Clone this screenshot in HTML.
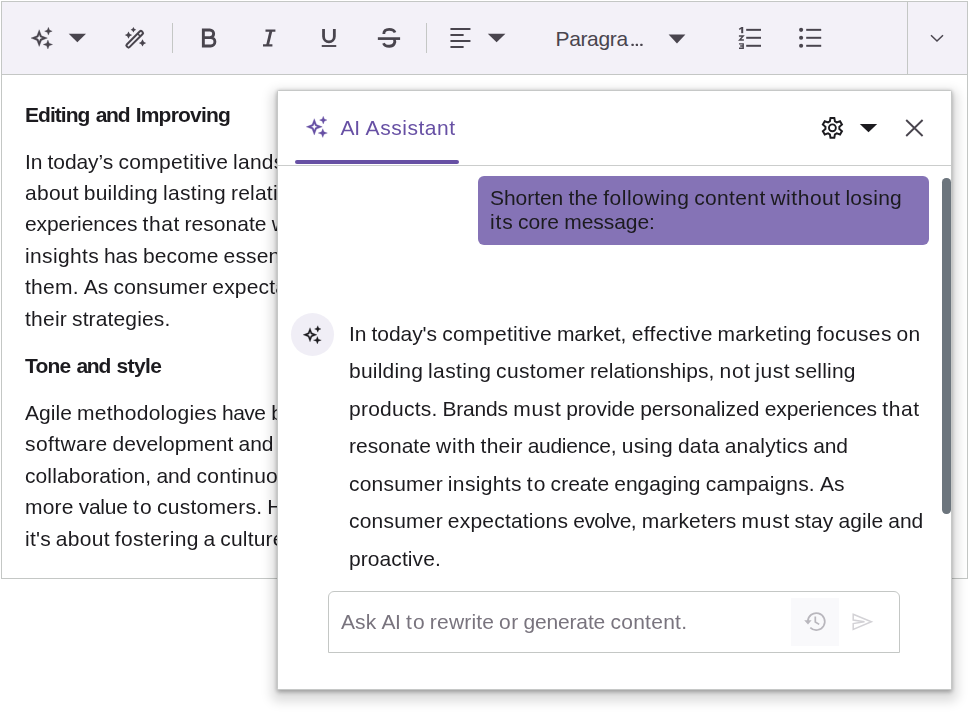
<!DOCTYPE html>
<html><head><meta charset="utf-8"><title>AI Assistant</title>
<style>
html,body{margin:0;padding:0;background:#fff}
body{width:969px;height:713px;position:relative;overflow:hidden;font-family:"Liberation Sans",sans-serif;font-size:21px}
#rte{position:absolute;left:1px;top:1px;width:967px;height:578px;box-sizing:border-box;border:1px solid #c4c7c5;background:#fff}
#tb{position:absolute;left:0;top:0;width:965px;height:72px;background:#f3f1f8;border-bottom:1px solid #c4c7c5}
#exp{position:absolute;left:905px;top:0;width:60px;height:72px;border-left:1px solid #c4c7c5;box-sizing:border-box}
#clipl{position:absolute;left:0;top:0;width:300px;height:578px;overflow:hidden}
#dlg{position:absolute;left:277px;top:90px;width:675px;height:600px;box-sizing:border-box;border:1px solid #c6c8c7;background:#fff;border-radius:1.5px;
 box-shadow:0 1.5px 4.5px rgba(0,0,0,.30),0 6px 12px 4.5px rgba(0,0,0,.15)}
#hl{position:absolute;left:278px;top:165px;width:673px;height:1px;background:#cbcdcc}
#ul{position:absolute;left:295px;top:160px;width:164px;height:4.2px;border-radius:2.2px;background:#6750a4}
#bub{position:absolute;left:478px;top:176px;width:451.3px;height:68.6px;border-radius:6px;background:#8573b6}
#sb{position:absolute;left:942.3px;top:177.5px;width:8.4px;height:336.5px;border-radius:4.2px;background:#6c757d}
#av{position:absolute;left:291px;top:313px;width:43px;height:43px;border-radius:50%;background:#f0eef6}
#inp{position:absolute;left:328px;top:591px;width:572px;height:62px;box-sizing:border-box;border:1px solid #c4c7c5;border-radius:6px 6px 0 0;background:#fff}
#hb{position:absolute;left:791px;top:598px;width:47.7px;height:47.7px;background:#f9f9fb}
.ln{position:absolute;white-space:nowrap;line-height:31px;height:31px;font-size:21px}
.fw span{position:absolute;top:0;white-space:pre}
.ln:not(#fmt):not(#tab){will-change:transform}
#ov{position:absolute;left:0;top:0}
</style></head><body>
<div id="rte"><div id="tb"><div id="exp"></div></div></div>
<div id="clipl">
<div class="ln fw" id="h1" style="left:25.40px;top:99px;font-weight:700;color:#1c1b1f"><span style="left:0.00px;letter-spacing:-0.953px">Editing </span><span style="left:70.64px;letter-spacing:-1.250px">and </span><span style="left:110.69px;letter-spacing:-0.789px">Improving</span></div>
<div class="ln fw" id="a1" style="left:24.90px;top:146px;font-weight:400;color:#1c1b1f"><span style="left:0.00px;letter-spacing:-0.203px">In </span><span style="left:22.52px;letter-spacing:-0.070px">today’s </span><span style="left:93.45px;letter-spacing:0.323px">competitive </span><span style="left:208.11px;letter-spacing:0.222px">landsc</span><span style="left:269.92px">ape, effective marketing is</span></div>
<div class="ln fw" id="a2" style="left:24.90px;top:177px;font-weight:400;color:#1c1b1f"><span style="left:0.00px;letter-spacing:0.270px">about </span><span style="left:58.84px;letter-spacing:0.219px">building </span><span style="left:137.97px;letter-spacing:0.341px">lasting </span><span style="left:205.91px;letter-spacing:0.227px">relatio</span><span style="left:264.47px">nships with customers. Brands need to deliver personalized</span></div>
<div class="ln fw" id="a3" style="left:24.90px;top:208px;font-weight:400;color:#1c1b1f"><span style="left:0.00px;letter-spacing:-0.083px">experiences </span><span style="left:117.61px;letter-spacing:0.568px">that </span><span style="left:159.55px;letter-spacing:0.025px">resonate </span><span style="left:246.66px;letter-spacing:1.047px">wi</span><span style="left:267.55px">th their audience. Leveraging data analytics and consumer</span></div>
<div class="ln fw" id="a4" style="left:24.90px;top:240px;font-weight:400;color:#1c1b1f"><span style="left:0.00px;letter-spacing:0.359px">insights </span><span style="left:78.92px;letter-spacing:-0.008px">has </span><span style="left:117.95px;letter-spacing:0.150px">become </span><span style="left:198.61px;letter-spacing:0.113px">essent</span><span style="left:261.05px">ial for creating targeted campaigns that engage and convert</span></div>
<div class="ln fw" id="a5" style="left:24.90px;top:271px;font-weight:400;color:#1c1b1f"><span style="left:0.00px;letter-spacing:0.250px">them. </span><span style="left:58.73px;letter-spacing:0.031px">As </span><span style="left:88.47px;letter-spacing:0.210px">consumer </span><span style="left:187.33px;letter-spacing:0.181px">expectat</span><span style="left:267.99px">ions evolve, marketers must remain agile and proactive in adapting</span></div>
<div class="ln fw" id="a6" style="left:24.90px;top:303px;font-weight:400;color:#1c1b1f"><span style="left:0.00px;letter-spacing:0.234px">their </span><span style="left:47.00px;letter-spacing:0.138px">strategies.</span></div>
<div class="ln fw" id="h2" style="left:25.40px;top:350px;font-weight:700;color:#1c1b1f"><span style="left:0.00px;letter-spacing:-0.797px">Tone </span><span style="left:51.42px;letter-spacing:-1.250px">and </span><span style="left:91.47px;letter-spacing:-0.625px">style</span></div>
<div class="ln fw" id="b1" style="left:24.90px;top:397px;font-weight:400;color:#1c1b1f"><span style="left:0.00px;letter-spacing:0.035px">Agile </span><span style="left:52.05px;letter-spacing:0.263px">methodologies </span><span style="left:196.98px;letter-spacing:-0.505px">have </span><span style="left:246.20px;letter-spacing:-0.406px">be</span><span style="left:269.15px">come the backbone of modern</span></div>
<div class="ln fw" id="b2" style="left:24.90px;top:428px;font-weight:400;color:#1c1b1f"><span style="left:0.00px;letter-spacing:0.411px">software </span><span style="left:87.45px;letter-spacing:0.067px">development </span><span style="left:213.58px;letter-spacing:-0.086px">and </span><span style="left:253.64px;letter-spacing:-0.406px">be</span><span style="left:276.59px">yond, emphasizing flexibility,</span></div>
<div class="ln fw" id="b3" style="left:24.90px;top:460px;font-weight:400;color:#1c1b1f"><span style="left:0.00px;letter-spacing:0.097px">collaboration, </span><span style="left:131.39px;letter-spacing:-0.086px">and </span><span style="left:171.45px;letter-spacing:0.277px">continuou</span><span style="left:264.75px">s improvement. By breaking work into smaller pieces, teams deliver</span></div>
<div class="ln fw" id="b4" style="left:24.90px;top:491px;font-weight:400;color:#1c1b1f"><span style="left:0.00px;letter-spacing:0.198px">more </span><span style="left:53.66px;letter-spacing:-0.234px">value </span><span style="left:108.12px;letter-spacing:1.141px">to </span><span style="left:131.97px;letter-spacing:0.267px">customers. </span><span style="left:242.27px;letter-spacing:0.125px">Ho</span><span style="left:269.25px">wever, agile isn't just about process;</span></div>
<div class="ln fw" id="b5" style="left:24.90px;top:523px;font-weight:400;color:#1c1b1f"><span style="left:0.00px;letter-spacing:0.219px">it's </span><span style="left:30.86px;letter-spacing:0.273px">about </span><span style="left:89.72px;letter-spacing:0.400px">fostering </span><span style="left:178.53px;letter-spacing:0.000px">a </span><span style="left:195.28px;letter-spacing:0.195px">culture </span><span style="left:264.83px;letter-spacing:0.000px">o</span><span style="left:276.83px">f trust, transparency and shared ownership.</span></div>
</div>
<div id="dlg"></div>
<div id="hl"></div><div id="ul"></div>
<div id="bub"></div><div id="sb"></div><div id="av"></div>
<div id="inp"></div><div id="hb"></div>
<div class="ln fw" id="r1" style="left:348.95px;top:318px;font-weight:400;color:#1c1b1f"><span style="left:0.00px;letter-spacing:-0.203px">In </span><span style="left:22.52px;letter-spacing:-0.057px">today's </span><span style="left:93.25px;letter-spacing:0.323px">competitive </span><span style="left:207.91px;letter-spacing:-0.078px">market, </span><span style="left:282.64px;letter-spacing:0.369px">effective </span><span style="left:368.62px;letter-spacing:0.213px">marketing </span><span style="left:467.72px;letter-spacing:0.383px">focuses </span><span style="left:547.59px;letter-spacing:0.234px">on</span></div>
<div class="ln fw" id="r2" style="left:348.95px;top:355px;font-weight:400;color:#1c1b1f"><span style="left:0.00px;letter-spacing:0.217px">building </span><span style="left:79.12px;letter-spacing:0.341px">lasting </span><span style="left:147.06px;letter-spacing:0.339px">customer </span><span style="left:240.98px;letter-spacing:0.054px">relationships, </span><span style="left:370.61px;letter-spacing:0.625px">not </span><span style="left:406.27px;letter-spacing:0.547px">just </span><span style="left:445.78px;letter-spacing:0.193px">selling</span></div>
<div class="ln fw" id="r3" style="left:348.95px;top:393px;font-weight:400;color:#1c1b1f"><span style="left:0.00px;letter-spacing:0.244px">products. </span><span style="left:93.53px;letter-spacing:-0.206px">Brands </span><span style="left:164.23px;letter-spacing:0.734px">must </span><span style="left:217.16px;letter-spacing:-0.016px">provide </span><span style="left:291.14px;letter-spacing:0.023px">personalized </span><span style="left:415.67px;letter-spacing:-0.081px">experiences </span><span style="left:533.28px;letter-spacing:0.573px">that</span></div>
<div class="ln fw" id="r4" style="left:348.95px;top:430px;font-weight:400;color:#1c1b1f"><span style="left:0.00px;letter-spacing:0.025px">resonate </span><span style="left:87.09px;letter-spacing:0.661px">with </span><span style="left:131.62px;letter-spacing:0.238px">their </span><span style="left:178.64px;letter-spacing:-0.266px">audience, </span><span style="left:272.78px;letter-spacing:0.184px">using </span><span style="left:328.91px;letter-spacing:0.234px">data </span><span style="left:375.67px;letter-spacing:0.201px">analytics </span><span style="left:464.17px;letter-spacing:-0.078px">and</span></div>
<div class="ln fw" id="r5" style="left:348.95px;top:468px;font-weight:400;color:#1c1b1f"><span style="left:0.00px;letter-spacing:0.208px">consumer </span><span style="left:98.84px;letter-spacing:0.362px">insights </span><span style="left:177.78px;letter-spacing:1.141px">to </span><span style="left:201.62px;letter-spacing:0.025px">create </span><span style="left:265.31px;letter-spacing:-0.025px">engaging </span><span style="left:356.75px;letter-spacing:0.172px">campaigns. </span><span style="left:470.88px;letter-spacing:0.047px">As</span></div>
<div class="ln fw" id="r6" style="left:348.95px;top:505px;font-weight:400;color:#1c1b1f"><span style="left:0.00px;letter-spacing:0.208px">consumer </span><span style="left:98.84px;letter-spacing:0.205px">expectations </span><span style="left:224.22px;letter-spacing:-0.521px">evolve, </span><span style="left:292.83px;letter-spacing:0.145px">marketers </span><span style="left:392.53px;letter-spacing:0.734px">must </span><span style="left:445.44px;letter-spacing:0.141px">stay </span><span style="left:489.56px;letter-spacing:0.051px">agile </span><span style="left:539.34px;letter-spacing:-0.086px">and</span></div>
<div class="ln fw" id="r7" style="left:348.95px;top:543px;font-weight:400;color:#1c1b1f"><span style="left:0.00px;letter-spacing:0.083px">proactive.</span></div>
<div class="ln fw" id="u1" style="left:489.60px;top:182px;font-weight:400;color:#1c1b1f"><span style="left:0.00px;letter-spacing:-0.052px">Shorten </span><span style="left:78.44px;letter-spacing:0.195px">the </span><span style="left:113.22px;letter-spacing:0.506px">following </span><span style="left:204.17px;letter-spacing:0.362px">content </span><span style="left:280.42px;letter-spacing:0.536px">without </span><span style="left:355.38px;letter-spacing:0.312px">losing</span></div>
<div class="ln fw" id="u2" style="left:489.60px;top:206px;font-weight:400;color:#1c1b1f"><span style="left:0.00px;letter-spacing:0.914px">its </span><span style="left:28.02px;letter-spacing:0.062px">core </span><span style="left:74.25px;letter-spacing:-0.051px">message:</span></div>
<div class="ln fw" id="tab" style="left:340.50px;top:112px;font-weight:400;color:#6750a4"><span style="left:0.00px;letter-spacing:-0.248px">AI </span><span style="left:25.12px;letter-spacing:0.531px">Assistant</span></div>
<div class="ln fw" id="ph" style="left:341.40px;top:606px;font-weight:400;color:#79747e"><span style="left:0.00px;letter-spacing:0.086px">Ask </span><span style="left:40.38px;letter-spacing:-0.406px">AI </span><span style="left:65.00px;letter-spacing:1.141px">to </span><span style="left:88.86px;letter-spacing:0.177px">rewrite </span><span style="left:158.12px;letter-spacing:0.422px">or </span><span style="left:182.44px;letter-spacing:-0.158px">generate </span><span style="left:269.44px;letter-spacing:0.266px">content.</span></div>
<div class="ln fw" id="fmt" style="left:555.50px;top:23px;font-weight:400;color:#49454e"><span style="left:0.00px;letter-spacing:-0.352px">Paragra</span></div>
<svg id="ov" width="969" height="713" viewBox="0 0 969 713"><path d="M39.20,29.70 L41.50,35.80 L47.40,38.10 L41.50,40.40 L39.20,46.50 L36.90,40.40 L31.00,38.10 L36.90,35.80Z M39.20,34.60 L40.20,37.10 L42.50,38.10 L40.20,39.10 L39.20,41.60 L38.20,39.10 L35.90,38.10 L38.20,37.10Z" fill="#49454e" fill-rule="evenodd" stroke="#49454e" stroke-width="0.30"/><path d="M48.40,27.30 L49.50,30.10 L52.20,31.20 L49.50,32.30 L48.40,35.10 L47.30,32.30 L44.60,31.20 L47.30,30.10Z" fill="#49454e" stroke="#49454e" stroke-width="0.30"/><path d="M47.90,40.00 L49.15,43.25 L52.60,44.50 L49.15,45.75 L47.90,49.00 L46.65,45.75 L43.20,44.50 L46.65,43.25Z" fill="#49454e" stroke="#49454e" stroke-width="0.30"/>
<path d="M68.7,33.8 H86 L77.35,42.3Z" fill="#49454e"/>
<g transform="translate(134.7,39.2) rotate(-45)"><rect x="-10.6" y="-1.9" width="21.2" height="3.8" rx="1.3" fill="none" stroke="#49454e" stroke-width="2.05"/><path d="M6.0,-1.9 V1.9" stroke="#49454e" stroke-width="1.5"/></g>
<path d="M128.50,31.40 Q129.24,34.36 132.20,35.10 Q129.24,35.84 128.50,38.80 Q127.76,35.84 124.80,35.10 Q127.76,34.36 128.50,31.40Z" fill="#49454e"/>
<path d="M133.40,27.00 Q133.96,29.24 136.20,29.80 Q133.96,30.36 133.40,32.60 Q132.84,30.36 130.60,29.80 Q132.84,29.24 133.40,27.00Z" fill="#49454e"/>
<path d="M142.50,39.20 Q143.24,42.16 146.20,42.90 Q143.24,43.64 142.50,46.60 Q141.76,43.64 138.80,42.90 Q141.76,42.16 142.50,39.20Z" fill="#49454e"/>
<rect x="172" y="23" width="1" height="30" fill="#c4c7c5"/>
<rect x="426" y="23" width="1" height="30" fill="#c4c7c5"/>
<path d="M203.35,28.6 V47.4 M202,29.95 H209.8 A3.85,3.85 0 0 1 209.8,37.65 H203.3 M209.8,37.65 H210.7 A4.2,4.2 0 0 1 210.7,46.05 H202" fill="none" stroke="#49454e" stroke-width="2.9" stroke-linejoin="miter"/>
<path d="M265.5,30.6 H275.4 M263,45.3 H272.4" fill="none" stroke="#49454e" stroke-width="2.2"/><path d="M271.0,30.6 L267.5,45.3" fill="none" stroke="#49454e" stroke-width="2.8"/>
<path d="M323.55,28.95 V36.45 A5.4,5.4 0 0 0 334.35,36.45 V28.95" fill="none" stroke="#49454e" stroke-width="2.8"/><path d="M321.75,46.0 H336.25" stroke="#49454e" stroke-width="1.9"/>
<path d="M377.85,38.6 H400.1" stroke="#49454e" stroke-width="2.7"/><path d="M383.8,34.0 C383.8,30.7 386.3,29.35 389.2,29.35 C392,29.35 394.2,30.4 395.0,32.5 M394.2,39.0 C395.6,42 394.5,46.25 389.3,46.25 C386.5,46.25 384.3,45.2 383.5,43.2" fill="none" stroke="#49454e" stroke-width="2.8"/>
<path d="M451.2,29.1 H469.7" stroke="#49454e" stroke-width="2" stroke-linecap="round"/>
<path d="M451.2,35.05 H462.9" stroke="#49454e" stroke-width="2" stroke-linecap="round"/>
<path d="M451.2,41.0 H469.7" stroke="#49454e" stroke-width="2" stroke-linecap="round"/>
<path d="M451.2,47.1 H462.9" stroke="#49454e" stroke-width="2" stroke-linecap="round"/>
<path d="M487.8,33.8 H505.4 L496.6,42.3Z" fill="#49454e"/>
<path d="M668.6,34.6 H685.4 L677,43.4Z" fill="#49454e"/>
<path d="M746.2,29.85 H761" stroke="#49454e" stroke-width="2"/>
<path d="M806.2,29.85 H821.2" stroke="#49454e" stroke-width="2"/>
<circle cx="801.1" cy="29.85" r="2.05" fill="#49454e"/>
<path d="M746.2,37.8 H761" stroke="#49454e" stroke-width="2"/>
<path d="M806.2,37.8 H821.2" stroke="#49454e" stroke-width="2"/>
<circle cx="801.1" cy="37.8" r="2.05" fill="#49454e"/>
<path d="M746.2,45.8 H761" stroke="#49454e" stroke-width="2"/>
<path d="M806.2,45.8 H821.2" stroke="#49454e" stroke-width="2"/>
<circle cx="801.1" cy="45.8" r="2.05" fill="#49454e"/>
<path d="M742.2,27 V33.2" stroke="#49454e" stroke-width="2"/><path d="M739.2,29.3 L741.8,27.7" stroke="#49454e" stroke-width="1.5"/>
<path d="M738.9,36 H743.2 L739.6,40 H743.9" fill="none" stroke="#49454e" stroke-width="1.4" stroke-linejoin="miter"/>
<path d="M739,43.9 H743.2 V48.2 H739 M740.2,46 H743.2" fill="none" stroke="#49454e" stroke-width="1.4" stroke-linejoin="miter"/>
<rect x="631.50" y="43.8" width="2.2" height="2.2" rx="0.5" fill="#49454e"/>
<rect x="635.80" y="43.8" width="2.2" height="2.2" rx="0.5" fill="#49454e"/>
<rect x="640.30" y="43.8" width="2.2" height="2.2" rx="0.5" fill="#49454e"/>
<path d="M931.0,35.2 L937,41.0 L943.0,35.2" fill="none" stroke="#49454e" stroke-width="1.5"/>
<path d="M314.29,118.64 L316.53,124.59 L322.28,126.83 L316.53,129.07 L314.29,135.02 L312.05,129.07 L306.29,126.83 L312.05,124.59Z M314.29,123.42 L315.26,125.85 L317.50,126.83 L315.26,127.80 L314.29,130.24 L313.31,127.80 L311.07,126.83 L313.31,125.85Z" fill="#6750a4" fill-rule="evenodd" stroke="#6750a4" stroke-width="0.29"/><path d="M323.26,116.30 L324.33,119.03 L326.96,120.10 L324.33,121.17 L323.26,123.90 L322.19,121.17 L319.55,120.10 L322.19,119.03Z" fill="#6750a4" stroke="#6750a4" stroke-width="0.29"/><path d="M322.77,128.68 L323.99,131.85 L327.35,133.07 L323.99,134.29 L322.77,137.45 L321.55,134.29 L318.19,133.07 L321.55,131.85Z" fill="#6750a4" stroke="#6750a4" stroke-width="0.29"/>
<path d="M829.87,121.32 L830.49,117.93 L834.31,117.93 L834.93,121.32 A7.00,7.00 0 0 1 836.79,122.39 L840.04,121.24 L841.94,124.54 L839.32,126.78 A7.00,7.00 0 0 1 839.32,128.92 L841.94,131.16 L840.04,134.46 L836.79,133.31 A7.00,7.00 0 0 1 834.93,134.38 L834.31,137.77 L830.49,137.77 L829.87,134.38 A7.00,7.00 0 0 1 828.01,133.31 L824.76,134.46 L822.86,131.16 L825.48,128.92 A7.00,7.00 0 0 1 825.48,126.78 L822.86,124.54 L824.76,121.24 L828.01,122.39 A7.00,7.00 0 0 1 829.87,121.32Z" fill="none" stroke="#1c1b1f" stroke-width="2" stroke-linejoin="miter"/>
<circle cx="832.4" cy="127.85" r="3.45" fill="none" stroke="#1c1b1f" stroke-width="1.9"/>
<path d="M859.8,123.9 H877.2 L868.5,132.3Z" fill="#1c1b1f"/>
<path d="M906.2,120 L922.6,136 M922.6,120 L906.2,136" stroke="#49454e" stroke-width="1.9"/>
<path d="M310.02,327.71 L311.95,332.85 L316.93,334.79 L311.95,336.73 L310.02,341.87 L308.08,336.73 L303.10,334.79 L308.08,332.85Z M310.02,331.84 L310.86,333.95 L312.80,334.79 L310.86,335.63 L310.02,337.74 L309.17,335.63 L307.23,334.79 L309.17,333.95Z" fill="#1c1b1f" fill-rule="evenodd" stroke="#1c1b1f" stroke-width="0.25"/><path d="M317.77,325.68 L318.70,328.04 L320.97,328.97 L318.70,329.90 L317.77,332.26 L316.84,329.90 L314.57,328.97 L316.84,328.04Z" fill="#1c1b1f" stroke="#1c1b1f" stroke-width="0.25"/><path d="M317.35,336.39 L318.40,339.13 L321.31,340.18 L318.40,341.24 L317.35,343.98 L316.30,341.24 L313.39,340.18 L316.30,339.13Z" fill="#1c1b1f" stroke="#1c1b1f" stroke-width="0.25"/>
<path d="M807.8,621.5 A8.5,8.5 0 1 1 810.3,627.6" fill="none" stroke="#b9b7bd" stroke-width="1.7"/>
<path d="M804.2,620.2 L808,624.6 L811.6,620.2Z" fill="#b9b7bd"/>
<path d="M815.3,616.6 V622 L819.2,624.4" fill="none" stroke="#b9b7bd" stroke-width="1.7"/>
<path d="M853.2,614.3 L871.4,621.8 L853.2,629.4 L853.2,623.6 L864.5,621.8 L853.2,620.1Z" fill="none" stroke="#d3d2d6" stroke-width="1.5" stroke-linejoin="miter"/></svg>
</body></html>
